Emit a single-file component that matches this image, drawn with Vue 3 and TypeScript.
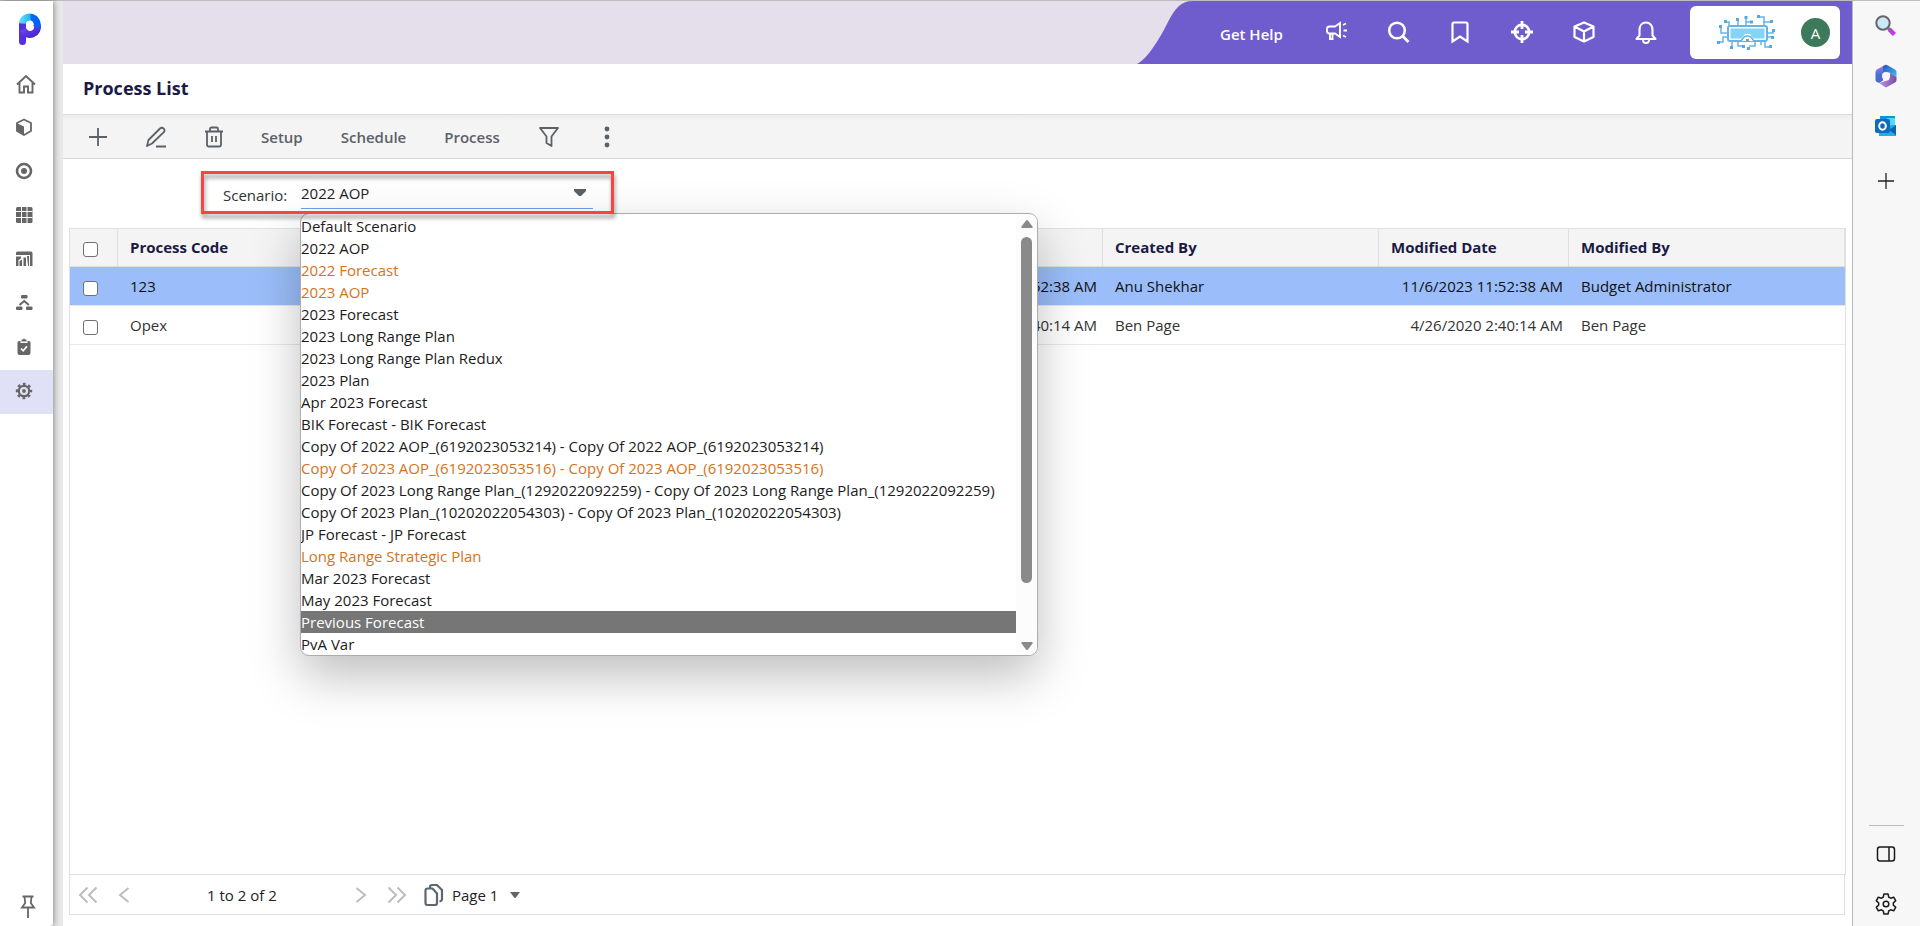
<script setup lang="ts">
import { ref } from 'vue'

interface Icon { name: string; body: string }
interface Row { code: string; created: string; createdBy: string; modified: string; modifiedBy: string; selected: boolean }
interface Scenario { label: string; tone?: 'accent' | 'hover' }

const navIcons: Icon[] = [
  { name: 'Home', body: '<path d="M3 13.500 12 5l9 8.500M5.500 12v9.500H10V15.500h4v6h4.500V12" fill="none" stroke="currentColor" stroke-width="1.900"/>' },
  { name: 'Models', body: '<path d="M11 4.500 18 8v8l-7 4-7-4V8z" fill="none" stroke="currentColor" stroke-width="1.800" stroke-linejoin="round"/><path d="M3.500 8 11 11.500v9L3.500 16z" fill="currentColor"/>' },
  { name: 'Targets', body: '<circle cx="11" cy="12" r="7" fill="none" stroke="currentColor" stroke-width="2.600"/><circle cx="11" cy="12" r="3" fill="currentColor"/>' },
  { name: 'Grid', body: '<rect x="3" y="4" width="16.500" height="16" rx="1.500" fill="currentColor"/><path d="M8.500 4v16M14 4v16M3 8.500h16.500M3 14.500h16.500" stroke="#fff" stroke-width="1"/>' },
  { name: 'Reports', body: '<path d="M3 6q0-1.500 1.500-1.500h13.500q1.500 0 1.500 1.500v13H17V8H3zM3 9.500h5v2L5.500 13v6H3zM6.500 14 9 12.500V19H6.500zM10.500 10.500H13V19h-2.500zM14 9h2v10h-1z" fill="currentColor"/>' },
  { name: 'Workflow', body: '<g fill="currentColor"><rect x="8" y="4" width="6.500" height="3.500" rx="1"/><rect x="3" y="15.500" width="6.500" height="3.500" rx="1"/><rect x="13" y="15.500" width="6.500" height="3.500" rx="1"/></g><path d="m6.500 14 4.700-4 4.700 4" fill="none" stroke="currentColor" stroke-width="2"/>' },
  { name: 'Tasks', body: '<path d="M6 6h1.500v2h7V6H16a1.500 1.500 0 0 1 1.500 1.500V18a2 2 0 0 1-2 2h-9a2 2 0 0 1-2-2V7.500A1.500 1.500 0 0 1 6 6zM8.500 6.500v-2H10l1-1.200 1 1.200h1.500v2z" fill="currentColor"/><path d="m8 13.500 2.200 2.300 3.800-4.600" fill="none" stroke="#fff" stroke-width="1.700"/>' },
  { name: 'Settings', body: '<circle cx="11" cy="12" r="5.200" fill="none" stroke="currentColor" stroke-width="2.200"/><circle cx="11" cy="12" r="1.900" fill="currentColor"/><circle cx="11" cy="12" r="7" fill="none" stroke="currentColor" stroke-width="2.400" stroke-dasharray="2.750 2.750" stroke-dashoffset="1.370"/>' }
]
const activeNav = ref('Settings')

const headerIcons: Icon[] = [
  { name: 'Announcements', body: '<path d="M16 3v14l-5-3.500H5.500A2.500 2.500 0 0 1 3 11V9a2.500 2.500 0 0 1 2.500-2.500H11zM6 13.500V19h2.500v-5M19 5l3-1.500M19.500 10.500H23M19 15.500l3 1.500" stroke-width="1.900"/>' },
  { name: 'Search', body: '<circle cx="11" cy="10.500" r="7.800" stroke-width="2.500"/><path d="m16.500 16 6 6" stroke-width="2.800"/>' },
  { name: 'Bookmarks', body: '<path d="M4.500 21.500V4A1.500 1.500 0 0 1 6 2.500h12A1.500 1.500 0 0 1 19.500 4v17.500L12 16.500z" stroke-width="2.200"/>' },
  { name: 'Focus', body: '<circle cx="12" cy="12" r="7.200" stroke-width="2.600"/><path d="M12 1v8M12 15v8M1 12h8M15 12h8" stroke-width="2.800"/>' },
  { name: 'Packages', body: '<path d="m12 2.500 9.500 4V17L12 21.500 2.500 17V6.500zM2.500 6.500 12 11.500l9.500-5M12 11.500v10" stroke-width="2.200" stroke-linejoin="round"/>' },
  { name: 'Notifications', body: '<path d="M2.500 19h19l-3-3.500V10c0-4.500-2.500-7.500-6.500-7.500S5.500 5.500 5.500 10v5.500z" stroke-width="2.100" stroke-linejoin="round"/><path d="M9 20a3 3 0 0 0 6 0" stroke-width="1.900"/>' }
]

const rows = ref<Row[]>([
  { code: '123', created: '11:52:38 AM', createdBy: 'Anu Shekhar', modified: '11/6/2023 11:52:38 AM', modifiedBy: 'Budget Administrator', selected: true },
  { code: 'Opex', created: '2:40:14 AM', createdBy: 'Ben Page', modified: '4/26/2020 2:40:14 AM', modifiedBy: 'Ben Page', selected: false }
])

const scenario = ref('2022 AOP')
const scenarios: Scenario[] = [
  { label: 'Default Scenario' },
  { label: '2022 AOP' },
  { label: '2022 Forecast', tone: 'accent' },
  { label: '2023 AOP', tone: 'accent' },
  { label: '2023 Forecast' },
  { label: '2023 Long Range Plan' },
  { label: '2023 Long Range Plan Redux' },
  { label: '2023 Plan' },
  { label: 'Apr 2023 Forecast' },
  { label: 'BIK Forecast - BIK Forecast' },
  { label: 'Copy Of 2022 AOP_(6192023053214) - Copy Of 2022 AOP_(6192023053214)' },
  { label: 'Copy Of 2023 AOP_(6192023053516) - Copy Of 2023 AOP_(6192023053516)', tone: 'accent' },
  { label: 'Copy Of 2023 Long Range Plan_(1292022092259) - Copy Of 2023 Long Range Plan_(1292022092259)' },
  { label: 'Copy Of 2023 Plan_(10202022054303) - Copy Of 2023 Plan_(10202022054303)' },
  { label: 'JP Forecast - JP Forecast' },
  { label: 'Long Range Strategic Plan', tone: 'accent' },
  { label: 'Mar 2023 Forecast' },
  { label: 'May 2023 Forecast' },
  { label: 'Previous Forecast', tone: 'hover' },
  { label: 'PvA Var' }
]
</script>

<template>
  <div class="shell">
    <nav class="nav" aria-label="Main">
      <a class="logo" href="#" aria-label="Planful">
        <svg width="22" height="32" viewBox="0 0 22 32">
          <defs>
            <linearGradient id="stem" x1="0" y1="0" x2="1" y2="1"><stop offset="0" stop-color="#7a4df5" /><stop offset="1" stop-color="#4524cf" /></linearGradient>
            <linearGradient id="bowl" x1="0" y1="0" x2="1" y2="0"><stop offset="0" stop-color="#51d5fa" /><stop offset=".5" stop-color="#25b5f5" /><stop offset=".6" stop-color="#0769f0" /><stop offset="1" stop-color="#0560f5" /></linearGradient>
          </defs>
          <path d="M3.500 28.500V11" stroke="#5430dc" stroke-width="7" stroke-linecap="round" />
          <path d="M4 16.500a7.300 7.300 0 0 0 14-5" fill="none" stroke="url(#stem)" stroke-width="7" />
          <path d="M3.500 10.500a7.300 7.300 0 1 1 13.800 4" fill="none" stroke="url(#bowl)" stroke-width="7" />
          <circle cx="10.700" cy="11.700" r="3.800" fill="#fff" />
        </svg>
      </a>
      <button v-for="icon in navIcons" :key="icon.name" class="nav-item" :class="{ active: icon.name === activeNav }" :aria-label="icon.name" @click="activeNav = icon.name">
        <svg width="24" height="24" viewBox="0 0 24 24" v-html="icon.body"></svg>
      </button>
      <button class="pin" aria-label="Pin menu">
        <svg width="16" height="24" viewBox="0 0 16 24" fill="none" stroke="#666" stroke-width="1.800"><path d="M2.500 1.500h11M4.500 2l.7 6L2 12.500h12L10.800 8l.7-6M8 13v10" /></svg>
      </button>
    </nav>

    <main class="main">
      <header class="top">
        <svg class="curve" width="56" height="63" viewBox="0 0 56 63" preserveAspectRatio="none"><path d="M0 63C9 59 21 41 31 21 38 8 43 0 56 0v63z" fill="#6f5ccd" /></svg>
        <div class="top-actions">
          <a class="help" href="#">Get Help</a>
          <button v-for="icon in headerIcons" :key="icon.name" class="top-icon" :aria-label="icon.name">
            <svg width="24" height="24" viewBox="0 0 24 24" fill="none" stroke="#fff" v-html="icon.body"></svg>
          </button>
          <div class="account">
            <svg width="58" height="36" viewBox="0 0 58 36">
              <g fill="none" stroke="#63b5e8" stroke-width="1.500">
                <path d="M9 7h3v4M21 11V5M29 11V2M33 7h-4M47 11V2h-4M46 7h8M4 12v6h6M10 22H6v5H2M15 26v6M21 26v5h5M38 26v5h-6M44 26v4M50 22h5M50 18h6v-3M48 26v6h6M30 26v-2" />
                <rect x="11" y="11" width="39" height="15" rx="2" stroke-width="2" />
              </g>
              <path d="M13.500 13.500h34v10h-11l-3-4q-3-1.500-6 0l-3 4h-11z" fill="#83d5f8" />
              <path d="m24 26 3-4q3.500-2 7 0l3 4" fill="#fff" stroke="#63b5e8" stroke-width="1.500" />
              <g fill="#54a9e2"><path d="M7 5h3v3H7zM19 3h3v3h-3zM27.500 1h3v3h-3zM33 5.500h3v3h-3zM40 0h3v3h-3zM53 5h3v3h-3zM2 10h3v3H2zM0 26h3v3H0zM13 31h3v3h-3zM25 30h3v3h-3zM30 32h3v3h-3zM52 30h3v3h-3zM54 21h3v3h-3zM55 14h3v3h-3zM29 24h3v3h-3z" /></g>
            </svg>
            <span class="avatar">A</span>
          </div>
        </div>
      </header>

      <div class="title-bar"><h1>Process List</h1></div>

      <div class="toolbar">
        <button aria-label="Add"><svg width="20" height="20" viewBox="0 0 20 20"><path d="M10 1v18M1 10h18" /></svg></button>
        <button aria-label="Edit"><svg class="edit" width="22" height="22" viewBox="0 0 22 22"><path d="m2 20 1.500-6L15 2.500q2-1.500 3.800.2 1.500 1.800 0 3.500L7 17.500zM11 20.500h10" /></svg></button>
        <button aria-label="Delete"><svg width="20" height="22" viewBox="0 0 20 22"><path d="M1 5.500h18M6 5V3q0-1.500 1.500-1.500h5Q14 1.500 14 3v2M3 6v13q0 1.500 1.500 1.500h11Q17 20.500 17 19V6M8 10v6M12 10v6" /></svg></button>
        <button class="word">Setup</button>
        <button class="word">Schedule</button>
        <button class="word">Process</button>
        <button class="filter" aria-label="Filter"><svg width="22" height="22" viewBox="0 0 22 22"><path d="M2 2h18l-6.500 8.500V20l-5-3v-6.500z" /></svg></button>
        <button class="more" aria-label="More"><svg width="6" height="22" viewBox="0 0 6 22"><g fill="#5c6168" stroke="none"><circle cx="3" cy="3" r="2.400" /><circle cx="3" cy="11" r="2.400" /><circle cx="3" cy="19" r="2.400" /></g></svg></button>
      </div>

      <section class="content">
        <div class="field">
          <label for="scenario">Scenario:</label>
          <div class="picker">
            <select id="scenario" v-model="scenario">
              <option v-for="item in scenarios" :key="item.label">{{ item.label }}</option>
            </select>
            <svg class="caret" width="12" height="8" viewBox="0 0 12 8"><path d="M0 0h12v2L7 7H5L0 2z" fill="#5c6168" /></svg>
            <div class="popup">
              <ul role="listbox" aria-label="Scenario">
                <li v-for="item in scenarios" :key="item.label" role="option" :class="item.tone" :aria-selected="item.label === scenario">{{ item.label }}</li>
              </ul>
              <div class="scroll" aria-hidden="true">
                <svg width="12" height="8" viewBox="0 0 12 8"><path d="m5 .5-4.500 6q-.5 1.500 1 1.500h9q1.500 0 1-1.500L7 .5q-1-1-2 0z" fill="#8a8a8a" /></svg>
                <span class="thumb"></span>
                <svg width="12" height="8" viewBox="0 0 12 8"><path d="m5 7.500-4.500-6Q0 0 1.500 0h9q1.500 0 1 1.500L7 7.500q-1 1-2 0z" fill="#8a8a8a" /></svg>
              </div>
            </div>
          </div>
        </div>

        <div class="grid">
          <table>
            <colgroup><col class="c-check" /><col /><col class="c-date" /><col class="c-by" /><col class="c-date" /><col class="c-by" /></colgroup>
            <thead>
              <tr>
                <th><input type="checkbox" aria-label="Select all" /></th>
                <th>Process Code</th>
                <th></th>
                <th>Created By</th>
                <th>Modified Date</th>
                <th>Modified By</th>
              </tr>
            </thead>
            <tbody>
              <tr v-for="row in rows" :key="row.code" :class="{ selected: row.selected }">
                <td><input type="checkbox" :aria-label="row.code" /></td>
                <td>{{ row.code }}</td>
                <td class="date">{{ row.created }}</td>
                <td>{{ row.createdBy }}</td>
                <td class="date">{{ row.modified }}</td>
                <td>{{ row.modifiedBy }}</td>
              </tr>
            </tbody>
          </table>
        </div>

        <footer class="pager">
          <div class="pager-range">
            <button aria-label="First page"><svg width="20" height="18" viewBox="0 0 20 18"><path d="M9.500 1.500 2 9l7.500 7.500M18.500 1.500 11 9l7.500 7.500" /></svg></button>
            <button class="prev" aria-label="Previous page"><svg width="12" height="18" viewBox="0 0 12 18"><path d="M10.500 2 2 9l8.500 7" /></svg></button>
            <span class="count">1 to 2 of 2</span>
            <button class="next" aria-label="Next page"><svg width="12" height="18" viewBox="0 0 12 18"><path d="m1.500 2 8.500 7-8.500 7" /></svg></button>
            <button aria-label="Last page"><svg width="20" height="18" viewBox="0 0 20 18"><path d="M1.500 1.500 9 9l-7.500 7.500M10.500 1.500 18 9l-7.500 7.500" /></svg></button>
          </div>
          <button class="page">
            <svg width="20" height="24" viewBox="0 0 20 24" fill="none" stroke="#5c6770" stroke-width="2.200"><path d="M3.500 5.500h5l4.500 5V20q0 2-2 2H3.500q-2 0-2-2V7.500q0-2 2-2z" /><path d="M6 5V4q0-2 2-2h5l5 5v9q0 2-2.500 2.500" /></svg>
            <span>Page 1</span>
            <svg class="page-caret" width="10" height="6" viewBox="0 0 10 6"><path d="M0 0h10L5.500 6h-1z" fill="#5c6770" /></svg>
          </button>
        </footer>
      </section>
    </main>

    <aside class="edge" aria-label="Browser tools">
      <button aria-label="Search">
        <svg width="22" height="22" viewBox="0 0 22 22"><path d="m14 14 5.500 5.500" stroke="#c239f5" stroke-width="4.500" /><path d="m12 12 3 3" stroke="#777" stroke-width="2.500" /><circle cx="8" cy="8" r="6.700" fill="#cde8f8" stroke="#666" stroke-width="2" /></svg>
      </button>
      <button aria-label="Microsoft 365">
        <svg width="22" height="24" viewBox="0 0 22 24">
          <defs>
            <linearGradient id="m-left" x1="0" y1="0" x2="0" y2="1"><stop offset="0" stop-color="#a27be0" /><stop offset=".5" stop-color="#4c6fd4" /><stop offset="1" stop-color="#4668cf" /></linearGradient>
            <linearGradient id="m-top" x1="0" y1="0" x2="1" y2="1"><stop offset="0" stop-color="#2c55b8" /><stop offset="1" stop-color="#41bdf5" /></linearGradient>
            <linearGradient id="m-bottom" x1="0" y1="0" x2="1" y2="0"><stop offset="0" stop-color="#c58fee" /><stop offset="1" stop-color="#70509f" /></linearGradient>
          </defs>
          <path d="M8 2 2 5.500Q.5 6.500.5 8v8q0 1 1 1.800L4 19l4-2.500V2z" fill="url(#m-left)" />
          <path d="m8 2 2-1q1-.5 2 0l8 4.500q1.500 1 1.500 2.500v5L14 8.500 8 10z" fill="url(#m-top)" />
          <path d="M21.500 13v3q0 1.500-1.500 2.500l-8 4.500q-1 .5-2 0l-6-4 10-3 1-7z" fill="url(#m-bottom)" />
          <circle cx="11" cy="12" r="4" fill="#f7f7f7" />
        </svg>
      </button>
      <button aria-label="Outlook">
        <svg width="22" height="22" viewBox="0 0 22 22">
          <path d="M5 1h15v11H5z" fill="#1490df" /><path d="M12 3h8v7h-8z" fill="#50d9ff" /><path d="M4 10h17v11H4z" fill="#28a8ea" /><path d="m14 15 7-5v10z" fill="#0a64ad" /><rect x="0" y="4" width="15" height="14" rx="2" fill="#0f6cbd" /><ellipse cx="7.500" cy="11" rx="3.300" ry="3.800" fill="none" stroke="#fff" stroke-width="2" />
        </svg>
      </button>
      <button class="customize" aria-label="Customize">
        <svg width="16" height="16" viewBox="0 0 16 16"><path d="M8 0v16M0 8h16" stroke="#222" stroke-width="1.300" /></svg>
      </button>
      <hr />
      <button aria-label="Hide sidebar">
        <svg width="20" height="16" viewBox="0 0 20 16" fill="none" stroke="#1b1b1b" stroke-width="1.500"><rect x="1.500" y="1" width="17" height="14" rx="2.500" /><path d="M13 1v14" /></svg>
      </button>
      <button aria-label="Settings">
        <svg width="22" height="22" viewBox="0 0 22 22" fill="none" stroke="#1b1b1b" stroke-width="1.500" stroke-linejoin="round"><path d="M9 1h4l.8 3.200 1.700 1 3.200-1 2 3.400L18.300 10v2l2.400 2.400-2 3.400-3.200-1-1.700 1L13 21H9l-.8-3.200-1.700-1-3.200 1-2-3.400L3.700 12v-2L1.300 7.600l2-3.400 3.200 1 1.700-1z" /><circle cx="11" cy="11" r="2.800" /></svg>
      </button>
    </aside>
  </div>
</template>

<style>
html, body { margin: 0; }
</style>

<style scoped>
* { box-sizing: border-box; }
.shell { display: flex; min-height: 100vh; border-top: 1px solid #bdbdbd; background: #fff; color: #222; font: 15px/22px "Open Sans", "Noto Sans", sans-serif; }
button { display: flex; align-items: center; justify-content: center; padding: 0; border: 0; background: none; color: inherit; font: inherit; }
svg { display: block; flex: none; }

.nav { display: flex; flex-direction: column; width: 53px; flex: none; box-shadow: 1px 0 6px rgba(0, 0, 0, .4); border-radius: 0 0 4px 0; z-index: 1; }
.logo { display: block; height: 61px; padding: 12px 0 0 19px; }
.nav-item { height: 44px; padding: 0 3px 2px 0; color: #666; }
.nav-item.active { background: #e0e0f6; }
.nav-item:first-of-type { padding-right: 1px; }
.pin { margin: auto 0 7px 20px; width: 16px; }

.main { display: flex; flex-direction: column; flex: 1; min-width: 0; border-left: 10px solid #e8e8e8; }
.top { display: flex; justify-content: flex-end; height: 63px; background: #e5dfeb; }
.curve { height: 63px; margin-right: -1px; }
.top-actions { display: flex; align-items: center; height: 63px; padding: 0 12px 0 28px; background: #6f5ccd; }
.help { width: 66px; color: #fff; font-weight: 600; text-decoration: none; white-space: nowrap; margin-right: 38px; padding-top: 2px; }
.top-icon { width: 24px; margin-right: 38px; padding-bottom: 2px; }
.account { display: flex; align-items: center; justify-content: space-between; width: 150px; height: 53px; margin-left: -6px; padding: 0 10px 0 27px; border-radius: 6px; background: #fff; }
.avatar { width: 29px; height: 29px; border-radius: 50%; background: #3d7a5b; color: #fff; line-height: 30px; text-align: center; }

.title-bar { display: flex; align-items: center; height: 51px; padding: 0 0 2px 20px; border-bottom: 1px solid #dcdcdc; }
h1 { margin: 0; color: #1b1a44; font-size: 18px; font-weight: 700; line-height: 24px; }
.toolbar { display: flex; align-items: center; height: 44px; padding: 1px 0 0 25px; border-bottom: 1px solid #d8d8d8; background: linear-gradient(#ececec, #f4f4f4 6px); color: #5c6168; }
.toolbar button { margin-right: 37px; }
.toolbar svg { fill: none; stroke: #5c6168; stroke-width: 1.800; stroke-linejoin: round; }
.toolbar .word { margin-right: 38px; font-weight: 600; }
.toolbar .filter { margin-right: 44px; }

.content { display: flex; flex-direction: column; flex: 1; padding: 12px 6px 11px; }
.field { position: relative; display: flex; align-items: center; align-self: flex-start; width: 413px; height: 43px; margin-left: 132px; padding-left: 22px; }
.field::after { content: ""; position: absolute; inset: 0; z-index: 4; border: 3px solid #fa4343; filter: drop-shadow(1px 4px 2px rgba(0, 0, 0, .4)); pointer-events: none; }
.field label { width: 78px; padding-top: 4px; color: #333; }
.picker { position: relative; width: 292px; }
select { display: block; width: 100%; height: 32px; padding: 2px 0 0; border: 0; border-bottom: 1px solid #6ea0ee; border-radius: 0; background: none; appearance: none; color: #222; font: inherit; }
.caret { position: absolute; top: 12px; right: 7px; pointer-events: none; }
.popup { position: absolute; top: 36px; left: -1px; z-index: 3; display: flex; width: 738px; padding-top: 1px; border: 1px solid #acacac; border-radius: 9px; background: #fff; box-shadow: 0 20px 50px rgba(0, 0, 0, .26); overflow: hidden; }
ul { flex: 1; min-width: 0; margin: 0; padding: 0; list-style: none; }
li { white-space: nowrap; height: 22px; color: #1c1c1c; }
li.accent { color: #d6731a; }
li.hover { background: #767676; color: #fff; }
.scroll { display: flex; flex-direction: column; align-items: center; width: 21px; padding: 5px 0; background: #fcfcfc; }
.thumb { width: 11px; height: 346px; margin: 9px 0 auto; border-radius: 6px; background: #8a8a8a; }

.grid { flex: 1; margin-top: 14px; border: 1px solid #e0e0e0; }
table { width: 100%; border-collapse: separate; border-spacing: 0; table-layout: fixed; }
.c-check { width: 48px; }
.c-date { width: 190px; }
.c-by { width: 276px; }
th { height: 38px; padding: 0 0 2px 12px; border-right: 1px solid #e0e0e0; border-bottom: 1px solid #e0e0e0; background: #f4f4f4; color: #1b1a44; font-weight: 700; text-align: left; }
th:nth-child(2) { border-right: 0; }
td { height: 39px; padding: 0 0 0 12px; border-bottom: 1px solid #e8e8e8; color: #333; white-space: nowrap; }
td.date { padding: 0 6px 0 0; text-align: right; }
.selected td { background: #9bbefa; color: #111; }
th:first-child, td:first-child { padding: 4px 0 0 13px; }
input { display: block; width: 15px; height: 15px; margin: 0; appearance: none; border: 1px solid #707070; border-radius: 3px; background: #fff; }

.pager { display: flex; align-items: center; height: 40px; margin-right: 1px; padding-left: 8px; border: 1px solid #e0e0e0; border-top: 0; }
.pager-range { display: flex; align-items: center; }
.pager-range svg { fill: none; stroke: #bdbdbd; stroke-width: 2; }
.prev { margin-left: 20px; }
.count { width: 225px; padding-left: 77px; }
.next { margin-right: 20px; }
.page { gap: 8px; margin-left: 17px; }
.page-caret { margin-left: 4px; }

.edge { display: flex; flex-direction: column; align-items: center; width: 68px; flex: none; padding: 13px 1px 10px 0; border-left: 1px solid #b8b8b8; background: #f7f7f7; }
.edge button { width: 24px; height: 24px; margin-bottom: 26px; }
.edge .customize { margin-top: 5px; }
.edge hr { width: 35px; margin: auto 0 16px; border: 0; border-top: 1px solid #bdbdbd; }
.edge button:last-child { margin-bottom: 0; }
</style>
